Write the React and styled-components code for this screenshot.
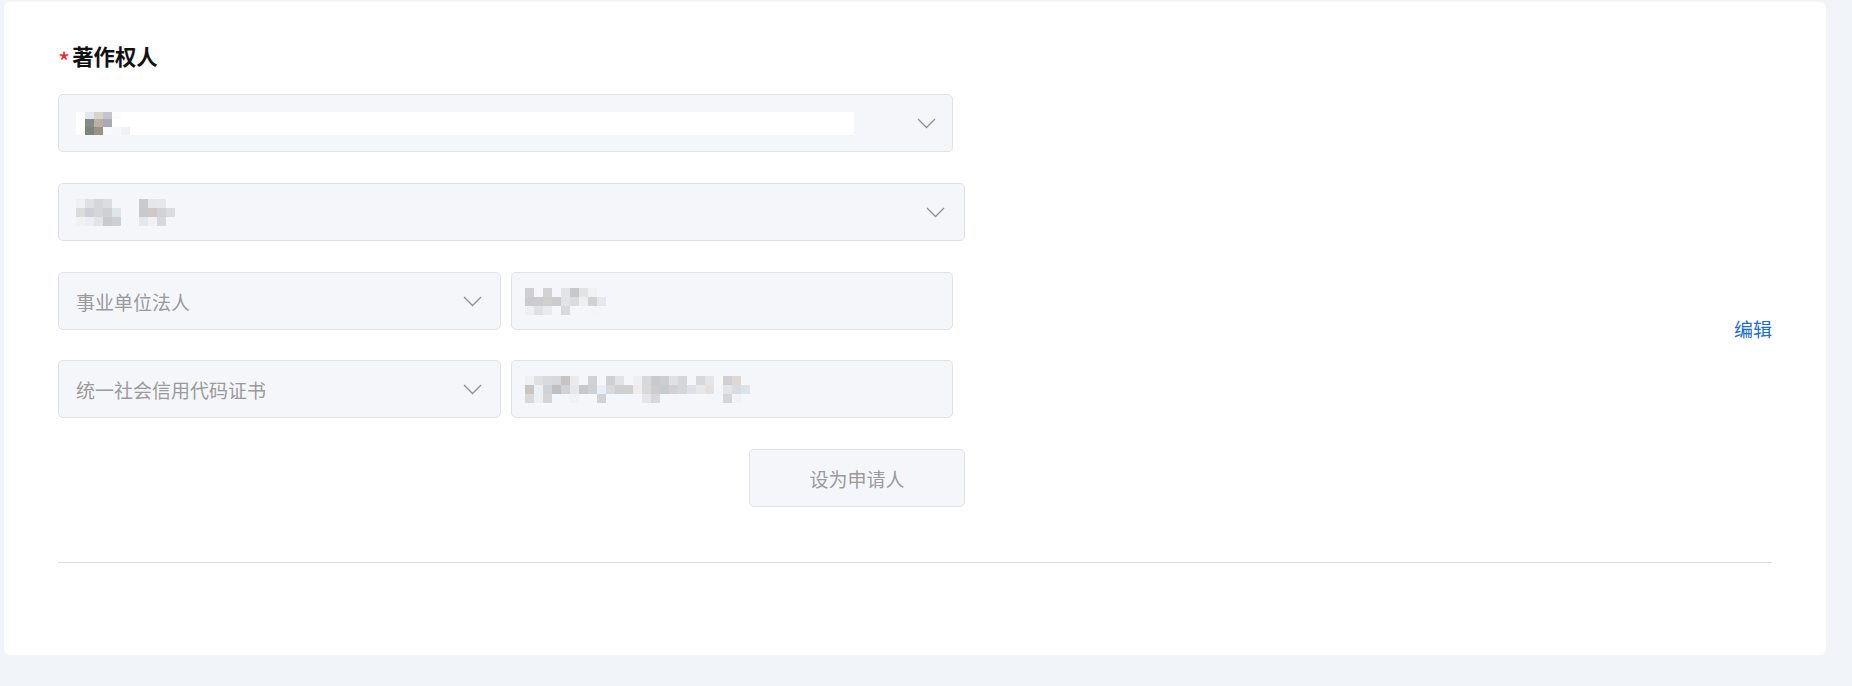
import React from 'react';
import styled, { createGlobalStyle } from 'styled-components';

const GlobalStyle = createGlobalStyle`
  html, body {
    margin: 0;
    padding: 0;
    background: #f1f4f8;
  }
  body {
    font-family: "Noto Sans CJK SC", "Noto Sans", sans-serif;
  }
`;

const Page = styled.div`
  padding: 2px 26px 30px 4px;
`;

const Card = styled.div`
  background: #fff;
  border-radius: 6px;
  padding: 38px 54px 92px;
`;

const Title = styled.h2`
  margin: 0 0 24px;
  display: flex;
  align-items: center;
  height: 30px;
  font-size: 21.4px;
  font-weight: 700;
  color: #111;
`;

const Star = styled.span`
  color: #f5222d;
  font-size: 26px;
  font-weight: 400;
  line-height: 30px;
  margin: 11px 2px 0 0;
`;

const Section = styled.div`
  display: flex;
  align-items: center;
  justify-content: space-between;
`;

const Form = styled.div`
  width: 907px;
  display: flex;
  flex-direction: column;
  padding-bottom: 55px;
`;

const Row = styled.div`
  display: flex;
  gap: 10px;
  width: ${p => p.width || 895}px;
  margin-bottom: ${p => p.gap ?? 31}px;
`;

const Field = styled.div`
  box-sizing: border-box;
  flex: ${p => (p.width ? `0 0 ${p.width}px` : '1 1 auto')};
  height: 58px;
  display: flex;
  align-items: center;
  justify-content: space-between;
  padding: 0 ${p => p.padRight || 16}px 0 ${p => p.padLeft || 17}px;
  background: #f5f6fa;
  border: 1px solid #dfe2e7;
  border-radius: 5px;
  font-size: 19px;
  color: #9a9a9a;
`;

const Actions = styled.div`
  display: flex;
  justify-content: flex-end;
`;

const Button = styled.button`
  width: 216px;
  height: 58px;
  background: #f5f6fa;
  border: 1px solid #dfe2e7;
  border-radius: 5px;
  font-family: inherit;
  font-size: 19px;
  color: #9a9a9a;
  cursor: pointer;
`;

const EditLink = styled.a`
  font-size: 19px;
  color: #1a6fcf;
  text-decoration: none;
  cursor: pointer;
`;

const Divider = styled.div`
  height: 1px;
  background: #dedede;
`;

const Value = styled.div`
  display: flex;
  align-items: center;
`;

const Chevron = () => (
  <svg width="19" height="11" viewBox="0 0 19 11" fill="none">
    <polyline points="1,1 9.5,9.5 18,1" stroke="#8f8f8f" strokeWidth="1.3" />
  </svg>
);

// blurred (mosaic) values, one string per row, "-" = empty cell
const Mosaic = ({ rows, cell = 9, heights, width, fill }) => {
  const cols = Math.max(...rows.map(r => r.split(' ').length));
  const hs = heights || rows.map(() => cell);
  const w = width || cols * cell;
  const h = hs.reduce((a, b) => a + b, 0);
  let y = 0;
  return (
    <svg width={w} height={h} viewBox={`0 0 ${w} ${h}`}>
      {fill && <rect width={w} height={h} fill={fill} />}
      {rows.map((r, ri) => {
        const top = y;
        y += hs[ri];
        return r.split(' ').map((c, ci) =>
          c === '-' ? null : (
            <rect key={`${ri}-${ci}`} x={ci * cell} y={top} width={cell} height={hs[ri]} fill={`#${c}`} />
          )
        );
      })}
    </svg>
  );
};

const nameRows = [
  '- dfe7ef d7d2cc c4c4cb fbfcfd',
  '- 878b87 b9b1a6 a9aab3',
  '- 7e837e 9b9082 f8f9fb f6f7fa eff1f7',
];

const contactRows = [
  'eef0f4 dfe0e4 d6d7da dcdde0 - - - c9cacd e3e6ea e6e7ea -',
  'dcdcdc cdd0d6 d6d6d8 cfd0d3 dfe5ee - - c8c9cb cfc8c8 d2d2d6 dadbdd',
  'f0f1f3 eceef1 e2e4e7 c9cacc cfd0d3 - - e5e8eb f1f1f1 d7d8dc -',
];

const unitRows = [
  'd0d0d2 - d2d2d4 - e3e4e7 c8c8ca e3e4e6 f0f1f3 -',
  'cbcbcd ccccce d0cfcf cbcbcd e3e3e5 dadce0 eeeff1 d2d2d4 e3e8ef',
  'eeeff1 e0e1e4 e8eaee - d9d9db - - f3f5f8 -',
];

const codeRows = [
  'eef0f2 e0e0e2 d8dadd d5d9dc c8c4c2 ebebec - d2d2d4 - d0d0d3 e2e3e6 - eeeff0 d8d8da c8cacd cbcdd0 dfe0e5 d6d7da - d8d8da e5e5e8 - d0d0d4 dcd8d4 -',
  'c9c5c3 e8f0f8 cfd3d7 c0c0c2 d0d2d5 e5e8ec c8c8ca d0d0d2 e6f0f8 d8d8d9 cfcfd1 d0d0d2 f0ece8 d9d9db cdcdd0 c8cbd0 d2d2d6 d6d6da dde0e6 e6e7ea e3e1df f3f5f8 e2e4e8 d8dbe2 dde3ea',
  'd8d8da eeeff1 d5d5d7 - - f0f2f5 - - d2d2d4 - - - - e5e6ea d8d8da - - - - - - - d6d6d8 f0f2f6 -',
];

const App = () => (
  <>
    <GlobalStyle />
    <Page>
      <Card>
        <Title>
          <Star>*</Star>著作权人
        </Title>
        <Section>
          <Form>
            <Row>
              <Field>
                <Value>
                  <Mosaic rows={nameRows} heights={[7, 8, 8]} width={778} fill="#ffffff" />
                </Value>
                <Chevron />
              </Field>
            </Row>
            <Row width={907}>
              <Field padRight={19}>
                <Value>
                  <Mosaic rows={contactRows} />
                </Value>
                <Chevron />
              </Field>
            </Row>
            <Row gap={30}>
              <Field width={443} padRight={18}>
                事业单位法人
                <Chevron />
              </Field>
              <Field width={442} padLeft={13}>
                <Value>
                  <Mosaic rows={unitRows} />
                </Value>
              </Field>
            </Row>
            <Row>
              <Field width={443} padRight={18}>
                统一社会信用代码证书
                <Chevron />
              </Field>
              <Field width={442} padLeft={13}>
                <Value>
                  <Mosaic rows={codeRows} />
                </Value>
              </Field>
            </Row>
            <Actions>
              <Button>设为申请人</Button>
            </Actions>
          </Form>
          <EditLink>编辑</EditLink>
        </Section>
        <Divider />
      </Card>
    </Page>
  </>
);

export default App;
